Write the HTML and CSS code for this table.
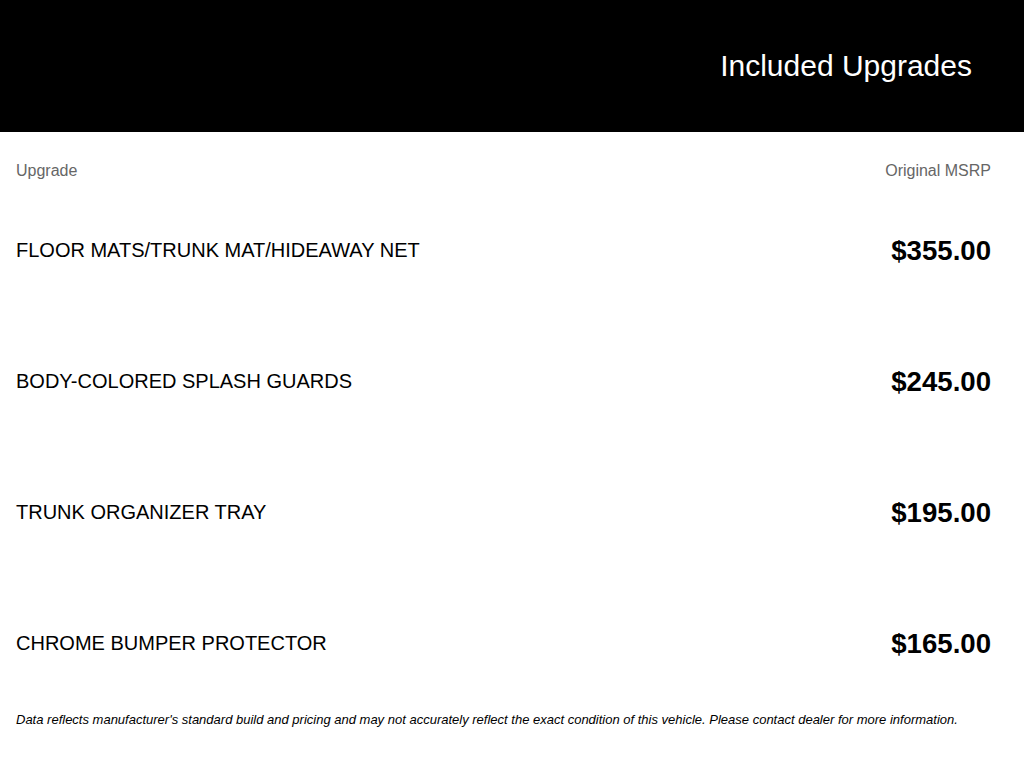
FILE: index.html
```html
<!DOCTYPE html>
<html>
<head>
<meta charset="utf-8">
<link rel="stylesheet" href="styles.css">
</head>
<body>
<header class="banner">
  <h1 class="title">Included Upgrades</h1>
</header>
<main class="content">
  <div class="cols">
    <span>Upgrade</span>
    <span>Original MSRP</span>
  </div>
  <div class="row"><span class="name">FLOOR MATS/TRUNK MAT/HIDEAWAY NET</span><span class="price">$355.00</span></div>
  <div class="row"><span class="name">BODY-COLORED SPLASH GUARDS</span><span class="price">$245.00</span></div>
  <div class="row"><span class="name">TRUNK ORGANIZER TRAY</span><span class="price">$195.00</span></div>
  <div class="row"><span class="name">CHROME BUMPER PROTECTOR</span><span class="price">$165.00</span></div>
  <p class="note">Data reflects manufacturer's standard build and pricing and may not accurately reflect the exact condition of this vehicle. Please contact dealer for more information.</p>
</main>
</body>
</html>
```
FILE: styles.css
```css
html, body {
  margin: 0;
  padding: 0;
  background: #fff;
  font-family: "Liberation Sans", Arial, sans-serif;
  color: #000;
}
.banner {
  background: #000;
  height: 132px;
  display: flex;
  align-items: center;
  justify-content: flex-end;
  padding-right: 52px;
  box-sizing: border-box;
}
.title {
  margin: 0;
  color: #fff;
  font-weight: normal;
  font-size: 30px;
  line-height: 34px;
}
.content {
  padding: 0 33px 0 16px;
}
.cols {
  display: flex;
  justify-content: space-between;
  padding-top: 29px;
  font-size: 16px;
  line-height: 20px;
  color: #666;
  height: 24px;
}
.row {
  display: flex;
  justify-content: space-between;
  align-items: center;
  height: 131px;
}
.name {
  font-size: 20px;
}
.price {
  font-size: 27.6px;
  font-weight: bold;
}
.note {
  margin: 3px 0 0;
  font-size: 13px;
  line-height: 16px;
  font-style: italic;
}
```
